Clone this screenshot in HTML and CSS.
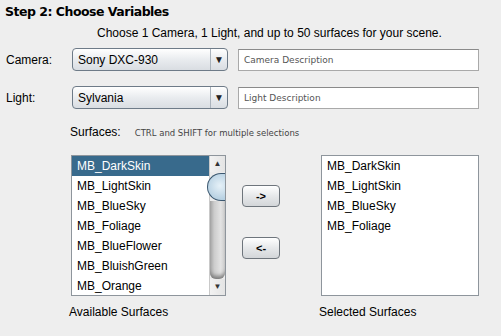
FILE: index.html
```html
<!DOCTYPE html>
<html>
<head>
<meta charset="utf-8">
<link rel="stylesheet" href="styles.css">
</head>
<body>
<div class="panel">
  <h1 class="title">Step 2: Choose Variables</h1>
  <p class="subtitle">Choose 1 Camera, 1 Light, and up to 50 surfaces for your scene.</p>

  <div class="row row-camera">
    <span class="label">Camera:</span>
    <div class="combo"><span class="combo-text">Sony DXC-930</span><span class="combo-arrow">&#9660;</span></div>
    <div class="field">Camera Description</div>
  </div>

  <div class="row row-light">
    <span class="label">Light:</span>
    <div class="combo"><span class="combo-text">Sylvania</span><span class="combo-arrow">&#9660;</span></div>
    <div class="field">Light Description</div>
  </div>

  <div class="surfaces-line">
    <span class="surf-label">Surfaces:</span>
    <span class="hint">CTRL and SHIFT for multiple selections</span>
  </div>

  <div class="lists">
    <div class="col">
      <div class="list list-left">
        <ul class="items">
          <li class="sel">MB_DarkSkin</li>
          <li>MB_LightSkin</li>
          <li>MB_BlueSky</li>
          <li>MB_Foliage</li>
          <li>MB_BlueFlower</li>
          <li>MB_BluishGreen</li>
          <li>MB_Orange</li>
        </ul>
        <div class="scrollbar">
          <div class="sb-up">&#9650;</div>
          <div class="sb-track"></div>
          <div class="sb-down">&#9660;</div>
          <div class="sb-thumb"></div>
        </div>
      </div>
      <div class="caption">Available Surfaces</div>
    </div>
    <div class="buttons">
      <div class="btn">-&gt;</div>
      <div class="btn">&lt;-</div>
    </div>
    <div class="col">
      <div class="list list-right">
        <ul class="items">
          <li>MB_DarkSkin</li>
          <li>MB_LightSkin</li>
          <li>MB_BlueSky</li>
          <li>MB_Foliage</li>
        </ul>
      </div>
      <div class="caption caption-right">Selected Surfaces</div>
    </div>
  </div>
</div>
</body>
</html>
```

FILE: styles.css
```css
html { background: #ffffff; }
body { margin: 0; }
.panel {
  width: 501px;
  height: 336px;
  background: #eeeeee;
  padding: 4px 0 0 6px;
  box-sizing: border-box;
  font-family: "Liberation Sans", Arial, sans-serif;
  color: #000;
}
.title {
  margin: 0 0 0 -1px;
  font-family: "DejaVu Sans", sans-serif;
  font-weight: bold;
  font-size: 12.5px;
  letter-spacing: -0.5px;
  line-height: 16px;
  height: 16px;
}
.subtitle {
  margin: 6px 0 0 91px;
  font-size: 12px;
  line-height: 14px;
}
.row {
  display: flex;
  align-items: center;
  height: 23px;
}
.row-camera { margin-top: 8px; }
.row-light { margin-top: 15px; }
.label {
  width: 66px;
  font-size: 12px;
}
.combo {
  width: 154px;
  height: 21px;
  border: 1px solid #6e7b88;
  border-radius: 4px;
  background: linear-gradient(#ffffff, #e9ecef 50%, #d9dde2);
  display: flex;
  align-items: center;
  box-sizing: content-box;
}
.combo-text {
  flex: 1;
  padding-left: 5px;
  font-size: 12px;
}
.combo-arrow {
  width: 16px;
  height: 21px;
  border-left: 1px solid #aab3bc;
  font-size: 10px;
  line-height: 21px;
  text-align: center;
  color: #222;
}
.field {
  margin-left: 10px;
  width: 234px;
  height: 20px;
  border: 1px solid #a9a9a9;
  border-top-color: #8a8a8a;
  background: #fff;
  font-family: "DejaVu Sans", sans-serif;
  font-size: 9px;
  line-height: 20px;
  padding-left: 5px;
  color: #555;
}
.surfaces-line {
  margin: 16px 0 0 64px;
  height: 14px;
  display: flex;
  align-items: baseline;
}
.surf-label { font-size: 12px; }
.hint {
  margin-left: 14px;
  font-family: "DejaVu Sans", sans-serif;
  font-size: 8.5px;
  color: #444;
}
.lists {
  display: flex;
  margin-top: 16px;
  margin-left: 65px;
}
.col { display: flex; flex-direction: column; }
.list {
  border: 1px solid #8e959c;
  background: #fff;
  height: 139px;
  display: flex;
  position: relative;
}
.list-left { width: 153px; }
.list-right { width: 156px; }
.items {
  list-style: none;
  margin: 0;
  padding: 0;
  flex: 1;
}
.items li {
  height: 20px;
  line-height: 20px;
  padding-left: 5px;
  font-size: 12px;
}
.items li.sel {
  background: #386a8c;
  color: #fff;
}
.scrollbar {
  width: 15px;
  display: flex;
  flex-direction: column;
  border-left: 1px solid #c9c9c9;
  background: #ececec;
}
.sb-up, .sb-down {
  height: 16px;
  font-size: 8px;
  line-height: 16px;
  text-align: center;
  color: #333;
  background: linear-gradient(90deg, #f2f2f2, #e4e4e4);
}
.sb-track {
  flex: 1;
  margin-top: 29px;
  background: linear-gradient(90deg, #a9a9a9, #cdcdcd 30%, #e2e2e2 70%, #d2d2d2);
  border-radius: 0 0 6px 6px;
  box-shadow: inset 0 -5px 4px -2px #7a7a7a;
}
.sb-thumb {
  position: absolute;
  right: 0;
  top: 17px;
  width: 17px;
  height: 26px;
  border: 1px solid #3c5870;
  border-right: none;
  border-radius: 14px 0 0 14px;
  background: radial-gradient(circle at 70% 45%, #e6f1f8, #b9d2e3 70%, #a9c6da);
}
.caption {
  margin-top: 9px;
  margin-left: -2px;
  font-size: 12px;
}
.buttons {
  display: flex;
  flex-direction: column;
  gap: 30px;
  margin: 30px 0 0 16px;
  width: 79px;
}
.btn {
  width: 36px;
  height: 20px;
  border: 1px solid #6e757c;
  border-radius: 4px;
  background: linear-gradient(#ffffff, #e6e8ea 50%, #d3d6d9);
  font-size: 11px;
  font-weight: bold;
  text-align: center;
  line-height: 20px;
}
```
